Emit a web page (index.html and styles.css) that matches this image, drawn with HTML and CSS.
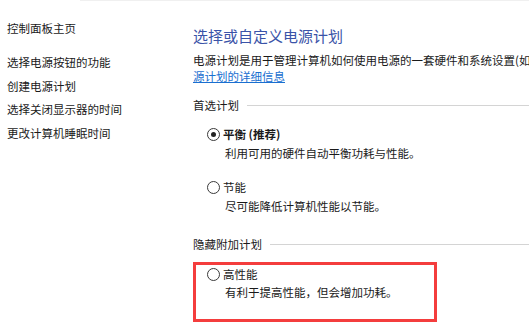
FILE: index.html
```html
<!DOCTYPE html>
<html lang="zh-CN">
<head>
<meta charset="utf-8">
<title>电源选项</title>
<link rel="stylesheet" href="styles.css">
</head>
<body>
<div class="topline"></div>
<div class="page">
  <nav class="nav">
    <a class="nav-home">控制面板主页</a>
    <a class="nav-item">选择电源按钮的功能</a>
    <a class="nav-item">创建电源计划</a>
    <a class="nav-item">选择关闭显示器的时间</a>
    <a class="nav-item">更改计算机睡眠时间</a>
  </nav>
  <main class="content">
    <h1 class="title">选择或自定义电源计划</h1>
    <p class="desc">电源计划是用于管理计算机如何使用电源的一套硬件和系统设置(如</p>
    <p class="desc"><a class="link">源计划的详细信息</a></p>

    <div class="group-head"><span>首选计划</span><div class="rule"></div></div>

    <div class="option">
      <div class="opt-row"><span class="radio checked"></span><span class="opt-label bold">平衡 (推荐)</span></div>
      <div class="opt-desc">利用可用的硬件自动平衡功耗与性能。</div>
    </div>
    <div class="option second">
      <div class="opt-row"><span class="radio"></span><span class="opt-label">节能</span></div>
      <div class="opt-desc">尽可能降低计算机性能以节能。</div>
    </div>

    <div class="group-head hidden-head"><span>隐藏附加计划</span><div class="rule"></div></div>

    <div class="highlight">
      <div class="opt-row"><span class="radio"></span><span class="opt-label">高性能</span></div>
      <div class="opt-desc">有利于提高性能，但会增加功耗。</div>
    </div>
  </main>
</div>
</body>
</html>
```
FILE: styles.css
```css
html, body {
  margin: 0;
  padding: 0;
  overflow: hidden;
  background: #ffffff;
}
body {
  width: 529px;
  height: 333px;
  font-family: "Noto Sans CJK SC", "Noto Sans", sans-serif;
  font-size: 11.5px;
  color: #1a1a1a;
}
.topline {
  height: 1px;
  margin-left: 80px;
  background: #f0f0f0;
}
.page {
  display: flex;
}
.nav {
  width: 186px;
  flex: none;
  padding: 17px 0 0 7px;
  display: flex;
  flex-direction: column;
}
.nav a {
  display: block;
  color: #1a1a1a;
  white-space: nowrap;
}
.nav-home {
  line-height: 20px;
  margin-bottom: 13px;
}
.nav-item {
  line-height: 23.5px;
}
.content {
  flex: 1;
  min-width: 0;
  overflow: hidden;
  padding-top: 25px;
}
.title {
  margin: 0 0 6px 0;
  font-size: 15px;
  font-weight: normal;
  line-height: 20px;
  color: #3a53a8;
  white-space: nowrap;
}
.desc {
  margin: 0;
  line-height: 16px;
  white-space: nowrap;
}
.link {
  color: #1a6fd0;
  text-decoration: underline;
}
.group-head {
  display: flex;
  align-items: center;
  gap: 8px;
  margin-top: 13px;
  line-height: 16px;
  color: #1a1a1a;
}
.group-head span {
  white-space: nowrap;
}
.rule {
  flex: 1;
  height: 1px;
  background: #d4d4d4;
}
.hidden-head {
  margin-top: 22px;
}
.option {
  margin-top: 13px;
  padding-left: 14px;
}
.option.second {
  margin-top: 18px;
}
.opt-row {
  display: flex;
  align-items: center;
  gap: 3px;
  line-height: 16px;
  height: 16px;
}
.radio {
  width: 11px;
  height: 11px;
  border: 1px solid #3a3a3a;
  border-radius: 50%;
  flex: none;
  position: relative;
  background: #fff;
}
.radio.checked::after {
  content: "";
  position: absolute;
  left: 3px;
  top: 3px;
  width: 5px;
  height: 5px;
  border-radius: 50%;
  background: #222;
}
.opt-label {
  white-space: nowrap;
}
.bold {
  font-weight: bold;
}
.opt-desc {
  margin-top: 3px;
  padding-left: 18px;
  line-height: 16px;
  white-space: nowrap;
}
.highlight {
  margin-top: 10px;
  width: 227px;
  border: 3px solid #f43d3d;
  padding: 1px 0 19px 11px;
}
.highlight .opt-desc {
  margin-top: 2px;
}
```
